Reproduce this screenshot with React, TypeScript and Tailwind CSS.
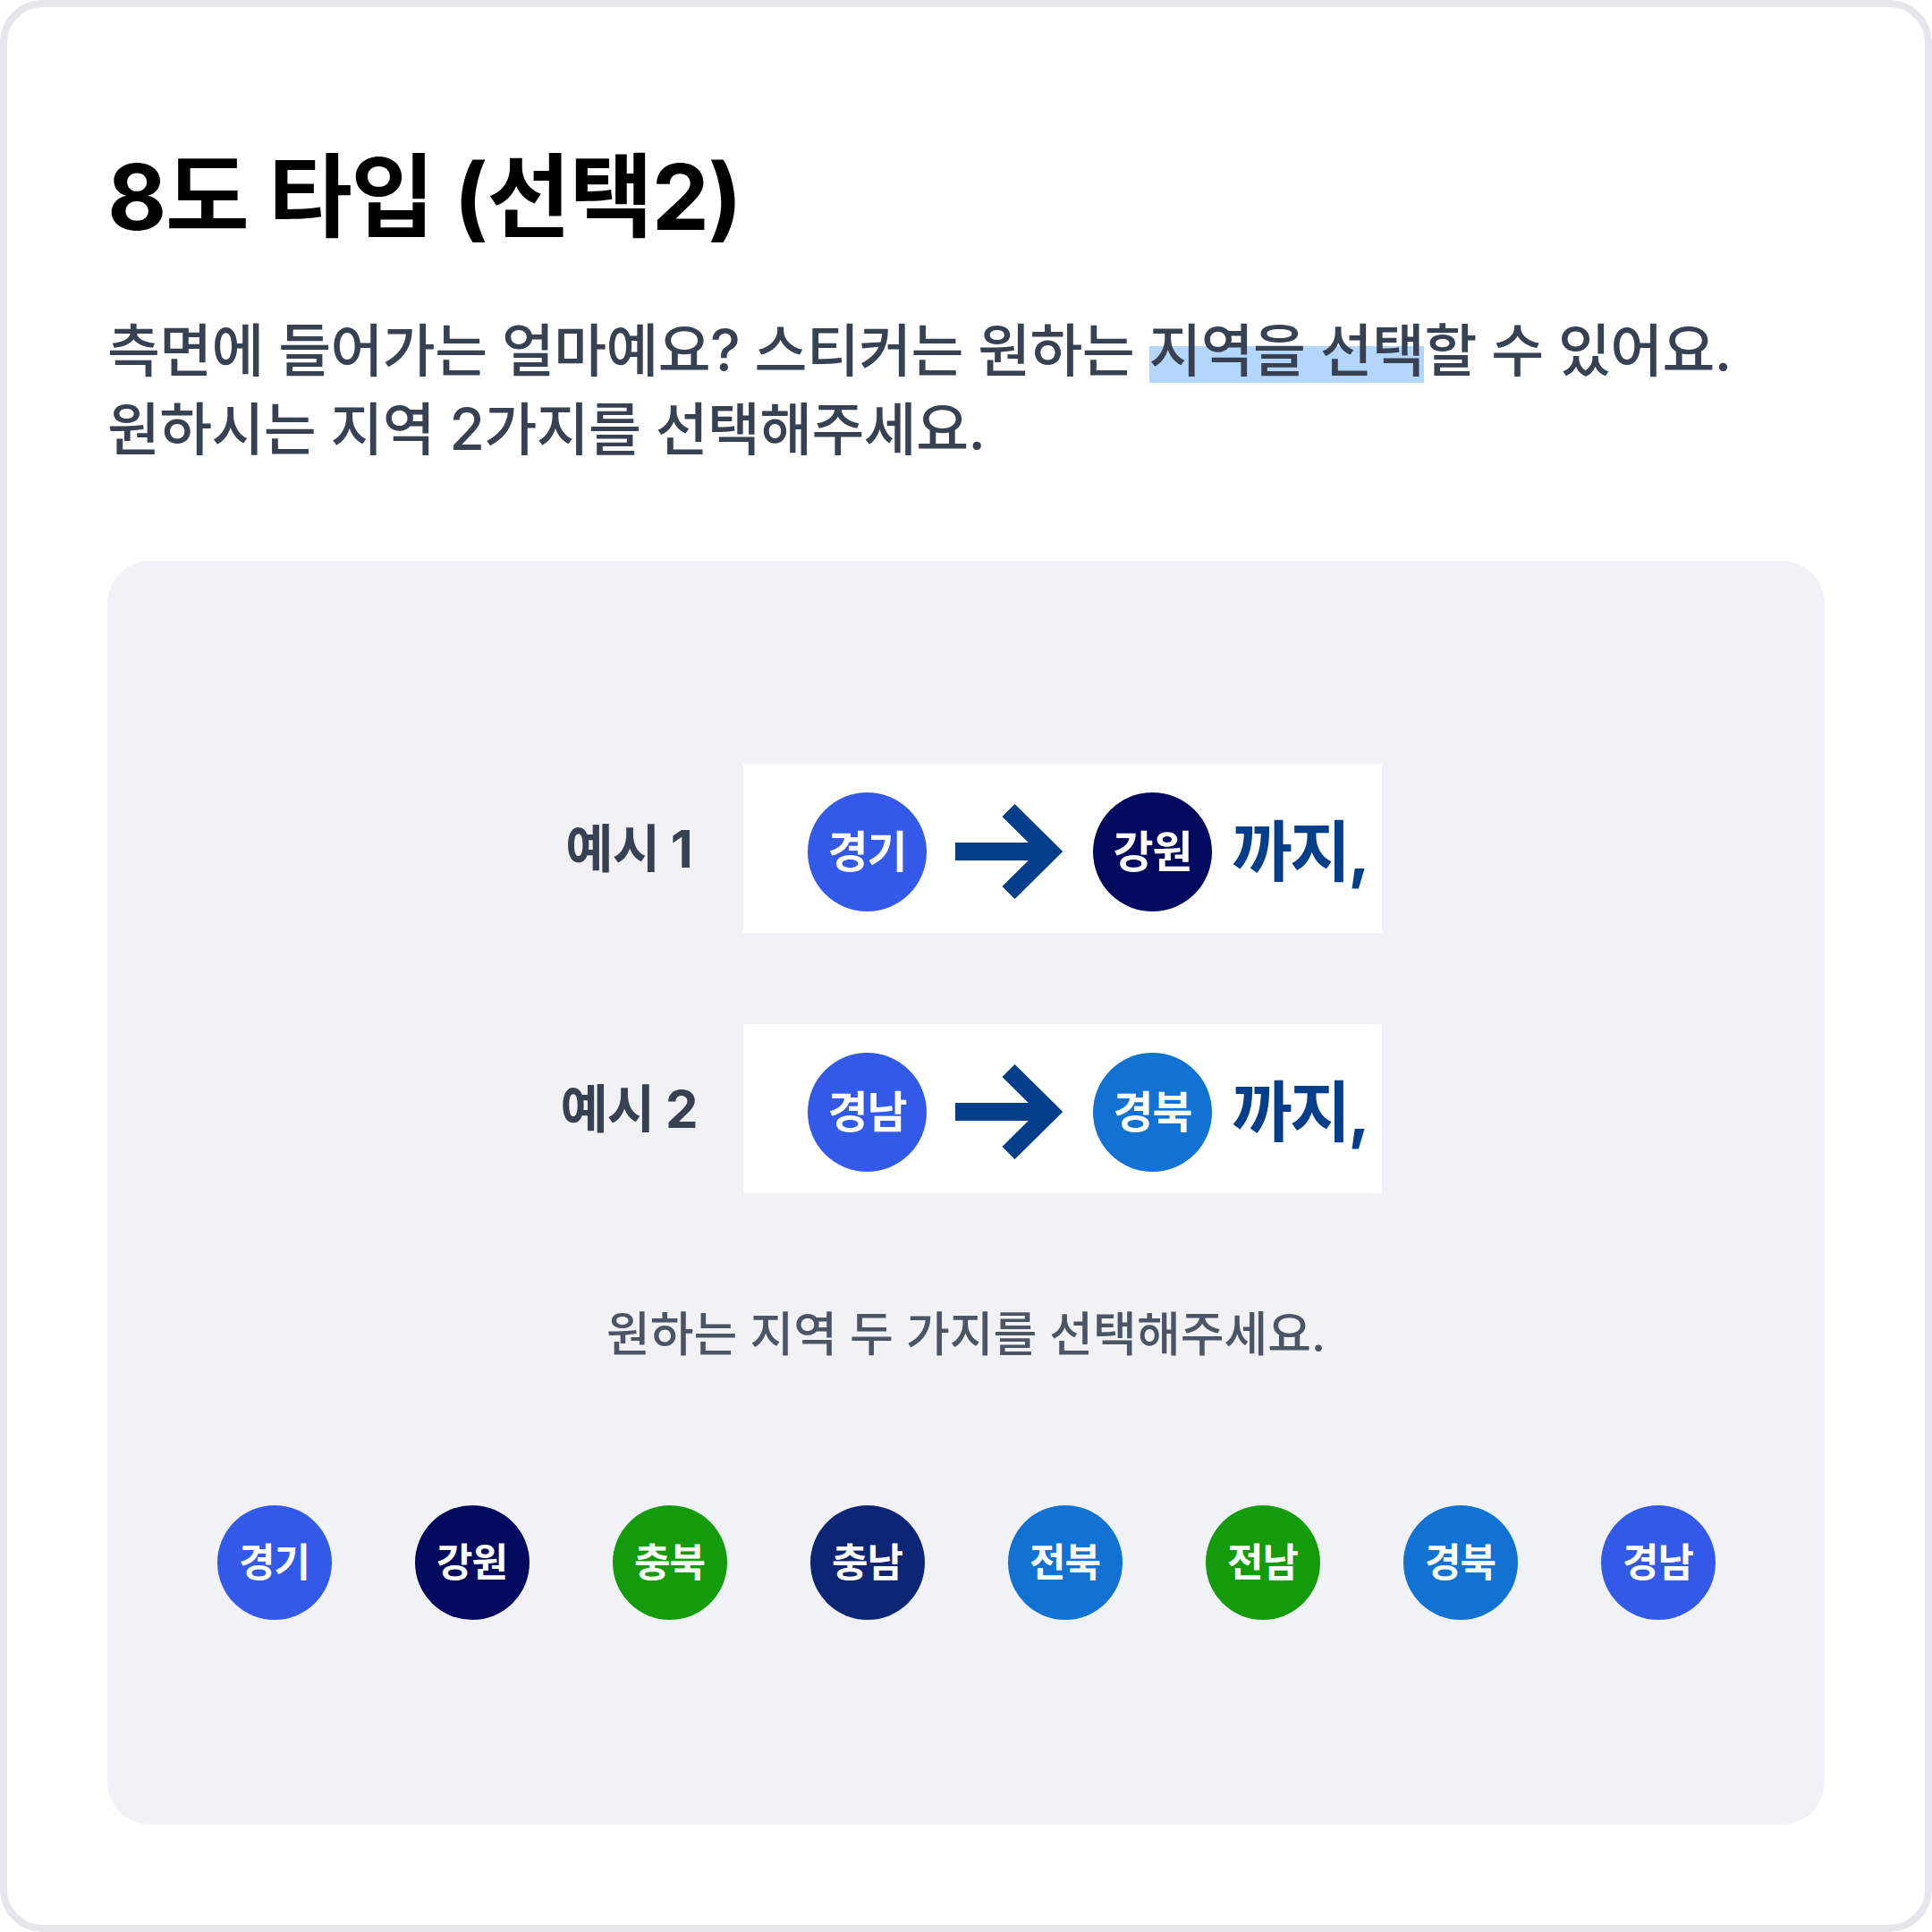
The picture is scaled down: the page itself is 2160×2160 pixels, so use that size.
import React from "react";

const FONT = { fontFamily: '"Inter", "Noto Sans CJK KR", "Noto Sans", sans-serif' };

function Arrow() {
  return (
    <svg width="120" height="106" viewBox="0 0 120 106" className="shrink-0">
      <rect x="0" y="43" width="96" height="20" fill="#023e8a" />
      <polyline
        points="59.5,7 106,53 59.5,99"
        fill="none"
        stroke="#023e8a"
        strokeWidth="20"
        strokeLinecap="butt"
        strokeLinejoin="miter"
      />
    </svg>
  );
}

function BigCircle({ label, color }: { label: string; color: string }) {
  return (
    <div
      className={`w-[133px] h-[133px] rounded-full flex items-center justify-center text-white font-bold text-[49px] leading-none tracking-[-1px] shrink-0 ${color}`}
    >
      {label}
    </div>
  );
}

function ExampleRow({ title, a, aColor, b, bColor }: { title: string; a: string; aColor: string; b: string; bColor: string }) {
  return (
    <div className="flex items-center gap-[40px]">
      <div className="w-[176px] text-center font-bold text-[58px] leading-none text-[#374151] tracking-[-1px]">{title}</div>
      <div className="w-[714px] h-[189px] bg-white flex items-center pl-[72px] pt-[7px]">
        <BigCircle label={a} color={aColor} />
        <div className="ml-[32px] flex items-center">
          <Arrow />
        </div>
        <div className="ml-[34px]">
          <BigCircle label={b} color={bColor} />
        </div>
        <div className="ml-[22px] font-bold text-[74px] leading-none text-[#023e8a] tracking-[-3px]">까지,</div>
      </div>
    </div>
  );
}

const regions: { label: string; color: string }[] = [
  { label: "경기", color: "bg-[#3259e8]" },
  { label: "강원", color: "bg-[#020a60]" },
  { label: "충북", color: "bg-[#139b0c]" },
  { label: "충남", color: "bg-[#0d2574]" },
  { label: "전북", color: "bg-[#1172d4]" },
  { label: "전남", color: "bg-[#139b0c]" },
  { label: "경북", color: "bg-[#1172d4]" },
  { label: "경남", color: "bg-[#3259e8]" },
];

export default function App() {
  return (
    <div className="w-[2160px] h-[2160px] bg-white" style={FONT}>
      <div className="w-[2160px] h-[2160px] border-[8px] border-[#e5e7eb] rounded-[48px] bg-white px-[112px] pt-[162px]">
        <h1 className="text-[102px] leading-[100px] font-bold text-black tracking-[-1.5px]">8도 타입 (선택2)</h1>
        <p className="mt-[78px] text-[64px] leading-[88px] font-medium text-[#374151] tracking-[-0.6px]">
          측면에 들어가는 얼마예요? 스티커는 원하는{" "}
          <span className="bg-[linear-gradient(to_bottom,transparent_44%,#b4d5fe_44%,#b4d5fe_97%,transparent_97%)]">지역을 선택</span>
          할 수 있어요.
          <br />
          원하시는 지역 2가지를 선택해주세요.
        </p>
        <div className="mt-[103px] w-[1920px] h-[1413px] bg-[#f1f2f6] rounded-[48px] flex flex-col items-center pt-[227px]">
          <ExampleRow title="예시 1" a="경기" aColor="bg-[#3259e8]" b="강원" bColor="bg-[#020a60]" />
          <div className="mt-[102px]">
            <ExampleRow title="예시 2" a="경남" aColor="bg-[#3259e8]" b="경북" bColor="bg-[#1172d4]" />
          </div>
          <div className="mt-[128px] text-[53px] leading-[60px] font-medium text-[#4b5563] tracking-[0px]">
            원하는 지역 두 가지를 선택해주세요.
          </div>
          <div className="mt-[161px] flex items-center gap-[93px]">
            {regions.map((r, i) => (
              <div
                key={i}
                className={`w-[128px] h-[128px] rounded-full flex items-center justify-center text-white font-bold text-[44px] leading-none tracking-[-1px] ${r.color}`}
              >
                {r.label}
              </div>
            ))}
          </div>
        </div>
      </div>
    </div>
  );
}
